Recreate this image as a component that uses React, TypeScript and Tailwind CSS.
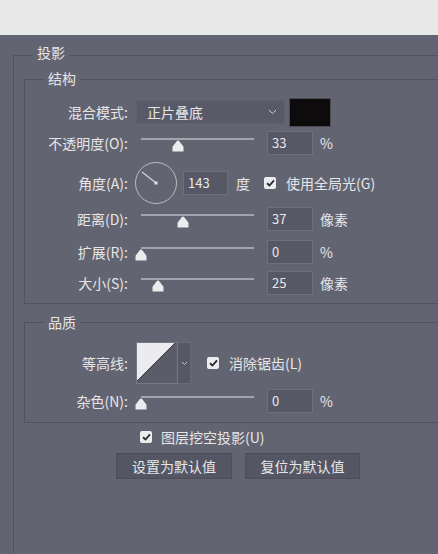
import type { ReactNode } from "react";

function Thumb() {
  return (
    <svg width="12" height="12" viewBox="0 0 12 12">
      <path
        d="M6 0.6 Q6.8 0.6 7.5 1.6 L11.5 6.8 L11.5 11.5 L0.5 11.5 L0.5 6.8 L4.5 1.6 Q5.2 0.6 6 0.6 Z"
        fill="#ececee"
      />
    </svg>
  );
}

function Slider({ pos }: { pos: number }) {
  return (
    <div className="relative w-[124px] h-[24px]">
      <div className="mt-[7px] ml-[5px] w-[113px] h-[2px] bg-[#a2a3ac]" />
      <div className="absolute top-[9px]" style={{ left: pos * 113 - 1 }}>
        <Thumb />
      </div>
    </div>
  );
}

function NumBox({ value, w = "w-[46px]" }: { value: string; w?: string }) {
  return (
    <div
      className={`${w} h-[24px] bg-[#575866] border border-[#6e6f7a] pl-[4px] text-[13px] leading-[22px] text-[#e8e8ea]`}
    >
      {value}
    </div>
  );
}

function Check() {
  return (
    <div className="w-[12px] h-[12px] rounded-[2px] bg-[#ededef] flex items-center justify-center">
      <svg width="9" height="8" viewBox="0 0 9 8">
        <path d="M1 4.2 L3.5 6.5 L8 1.3" fill="none" stroke="#2c2c33" strokeWidth="1.9" />
      </svg>
    </div>
  );
}

function Row({ label, className, children }: { label: string; className: string; children: ReactNode }) {
  return (
    <div className={`flex items-center ${className}`}>
      <div className="w-[103px] text-right whitespace-nowrap">{label}</div>
      <div className="ml-[8px] flex items-center">{children}</div>
    </div>
  );
}

function SliderRow({ label, pos, value, unit, className }: { label: string; pos: number; value: string; unit: string; className: string }) {
  return (
    <Row label={label} className={`h-[24px] ${className}`}>
      <Slider pos={pos} />
      <div className="ml-[7px]">
        <NumBox value={value} />
      </div>
      <span className="ml-[7px]">{unit}</span>
    </Row>
  );
}

export default function App() {
  return (
    <div className="w-[438px] h-[554px] overflow-hidden font-['Noto_Sans_CJK_SC','Noto_Sans',sans-serif] text-[14px] text-[#e6e6e8]">
      <div className="h-[35px] bg-[#e8e8e8]" />
      <div className="h-[519px] overflow-hidden bg-[#636471]">
        <fieldset className="mt-[7px] ml-[13px] w-[520px] border border-[#52535e] px-0 pt-0 pb-[200px]">
          <legend className="ml-[19px] px-[4px] pb-[6px] leading-[20px]">投影</legend>

          <fieldset className="ml-[10px] border border-[#52535e] px-0 pt-0 pb-[8px]">
            <legend className="ml-[19px] px-[4px] pb-[2px] leading-[20px]">结构</legend>

            <Row label="混合模式:" className="mt-[7px] h-[30px]">
              <div className="w-[149px] h-[24px] bg-[#595a68] border border-[#60616d] flex items-center justify-between pl-[10px] pr-[7px]">
                <span>正片叠底</span>
                <svg width="9" height="6" viewBox="0 0 9 6">
                  <path d="M1 1 L4.5 4.5 L8 1" fill="none" stroke="#cfcfd4" strokeWidth="1" />
                </svg>
              </div>
              <div className="ml-[4px] w-[42px] h-[29px] bg-[#0d0b0b] border border-[#4b4b55]" />
            </Row>

            <SliderRow label="不透明度(O):" pos={0.33} value="33" unit="%" className="mt-[4px]" />

            <Row label="角度(A):" className="mt-[6px] h-[44px]">
              <svg width="44" height="44" viewBox="0 0 44 44" className="-ml-[2px]">
                <circle cx="22" cy="22" r="20.5" fill="none" stroke="#b9bac2" strokeWidth="1" />
                <line x1="22" y1="22" x2="8" y2="11" stroke="#d4d4da" strokeWidth="1.2" />
                <rect x="20.5" y="20.5" width="3" height="3" fill="#e0e0e4" />
              </svg>
              <div className="ml-[5px]">
                <NumBox value="143" w="w-[45px]" />
              </div>
              <span className="ml-[8px]">度</span>
              <div className="ml-[14px]">
                <Check />
              </div>
              <span className="ml-[10px]">使用全局光(G)</span>
            </Row>

            <SliderRow label="距离(D):" pos={0.37} value="37" unit="像素" className="mt-[2px]" />
            <SliderRow label="扩展(R):" pos={0} value="0" unit="%" className="mt-[9px]" />
            <SliderRow label="大小(S):" pos={0.15} value="25" unit="像素" className="mt-[7px]" />
          </fieldset>

          <fieldset className="mt-[8px] ml-[10px] border border-[#52535e] px-0 pt-0 pb-[9px]">
            <legend className="ml-[19px] px-[4px] leading-[20px]">品质</legend>

            <Row label="等高线:" className="mt-[10px] h-[42px]">
              <div className="flex">
                <svg width="42" height="42" viewBox="0 0 42 42" className="border border-[#787984]">
                  <rect x="0" y="0" width="42" height="42" fill="#5b5c6a" />
                  <path d="M0 0 L40 0 L0 40 Z" fill="#ececee" />
                  <line x1="0" y1="40" x2="40" y2="0" stroke="#2e2e35" strokeWidth="1" />
                </svg>
                <div className="w-[13px] h-[42px] bg-[#575866] border border-[#6a6b76] border-l-0 flex items-center justify-center">
                  <svg width="7" height="5" viewBox="0 0 7 5">
                    <path d="M1 1 L3.5 3.5 L6 1" fill="none" stroke="#c8c8ce" strokeWidth="1" />
                  </svg>
                </div>
              </div>
              <div className="ml-[16px]">
                <Check />
              </div>
              <span className="ml-[10px]">消除锯齿(L)</span>
            </Row>

            <SliderRow label="杂色(N):" pos={0} value="0" unit="%" className="mt-[5px]" />
          </fieldset>

          <div className="mt-[4px] h-[20px] ml-[126px] flex items-center">
            <Check />
            <span className="ml-[9px]">图层挖空投影(U)</span>
          </div>

          <div className="mt-[6px] ml-[102px] flex gap-[13px]">
            <button className="w-[116px] h-[26px] bg-[#555664] border border-[#4c4d58] text-[14px] text-[#e6e6e8]">
              设置为默认值
            </button>
            <button className="w-[115px] h-[26px] bg-[#555664] border border-[#4c4d58] text-[14px] text-[#e6e6e8]">
              复位为默认值
            </button>
          </div>
        </fieldset>
      </div>
    </div>
  );
}
